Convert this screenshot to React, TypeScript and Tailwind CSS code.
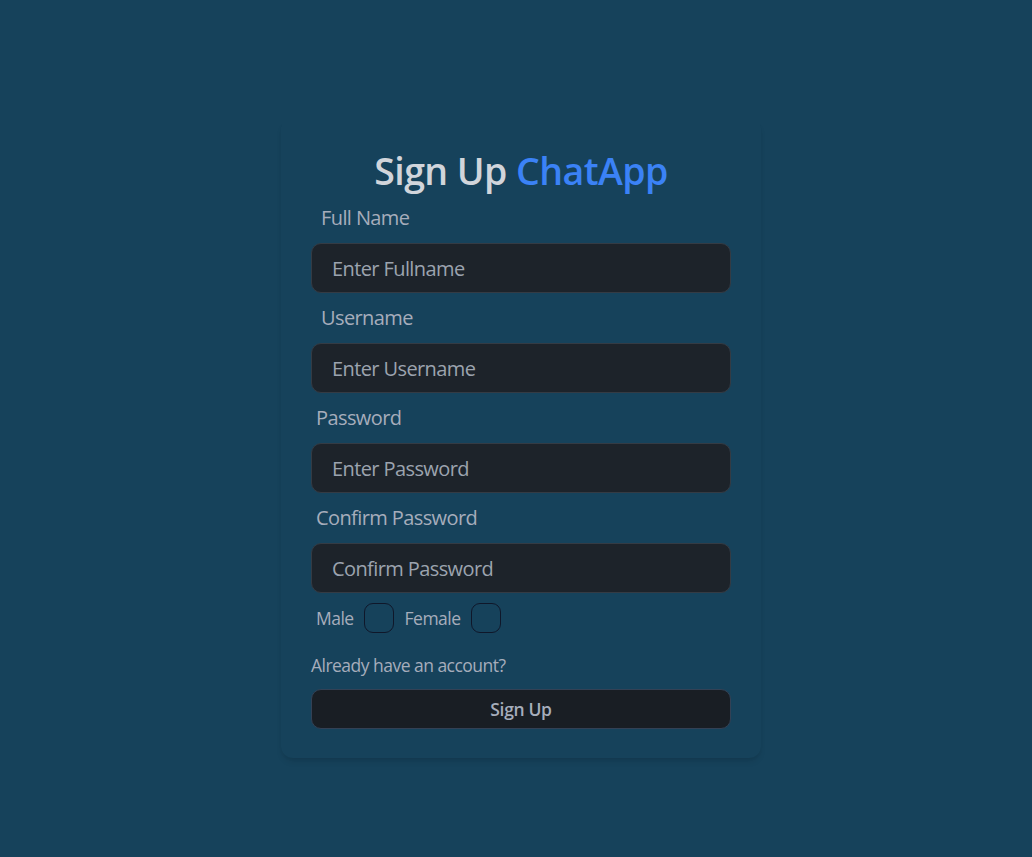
import React from "react";

const font = { fontFamily: '"Open Sans", "Noto Sans", sans-serif' };

function Field({ label, placeholder, wide }: { label: string; placeholder: string; wide?: boolean }) {
  return (
    <div className="flex flex-col">
      <label className={`flex items-center py-[10px] ${wide ? "px-[10px]" : "px-[5px]"}`}>
        <span className="text-[20px] leading-[30px] tracking-[-0.03em] text-[#a6adbb]">{label}</span>
      </label>
      <input
        type="text"
        placeholder={placeholder}
        className="h-[50px] w-full rounded-[10px] border border-[#343b44] bg-[#1d232a] px-[20px] text-[20px] tracking-[-0.03em] text-[#a6adbb] placeholder:text-[#9ca3af] outline-none"
      />
    </div>
  );
}

export default function App() {
  return (
    <div className="min-h-screen w-full bg-[#16425b] flex justify-center pt-[118px] pl-[10px]" style={font}>
      <div className="w-[480px] h-[640px] rounded-[12px] p-[30px] shadow-[0_5px_7px_-2px_rgba(0,0,0,0.12),0_2px_4px_-2px_rgba(0,0,0,0.08)]">
        <h1 className="text-center text-[37.5px] leading-[45px] font-semibold tracking-[-0.015em] text-[#d1d5db]">
          Sign Up <span className="text-[#3b82f6]">ChatApp</span>
        </h1>
        <form className="flex flex-col" onSubmit={(e) => e.preventDefault()}>
          <Field label="Full Name" placeholder="Enter Fullname" wide />
          <Field label="Username" placeholder="Enter Username" wide />
          <Field label="Password" placeholder="Enter Password" />
          <Field label="Confirm Password" placeholder="Confirm Password" />

          <div className="flex">
            <label className="flex items-center gap-[10px] py-[10px] px-[5px]">
              <span className="text-[17.5px] leading-[25px] tracking-[-0.03em] text-[#a6adbb]">Male</span>
              <span className="block h-[30px] w-[30px] rounded-[9px] border border-[#0f172a]" />
            </label>
            <label className="flex items-center gap-[10px] py-[10px] px-[5px] ml-[1px]">
              <span className="text-[17.5px] leading-[25px] tracking-[-0.03em] text-[#a6adbb]">Female</span>
              <span className="block h-[30px] w-[30px] rounded-[9px] border border-[#0f172a]" />
            </label>
          </div>

          <a href="#" className="mt-[10px] text-[17.5px] leading-[25px] tracking-[-0.03em] text-[#a6adbb]">
            Already have an account?
          </a>

          <button
            type="submit"
            className="mt-[11px] h-[40px] w-full rounded-[10px] border border-[#334155] bg-[#191e24] text-[17.5px] font-semibold tracking-[-0.02em] text-[#a6adbb]"
          >
            Sign Up
          </button>
        </form>
      </div>
    </div>
  );
}
